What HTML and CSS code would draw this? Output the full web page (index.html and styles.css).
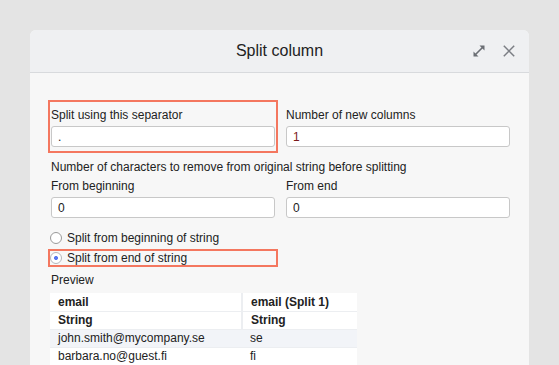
FILE: index.html
```html
<!DOCTYPE html>
<html lang="en">
<head>
<meta charset="utf-8">
<title>Split column</title>
<link rel="stylesheet" href="styles.css">
</head>
<body>
<div class="dialog">
    <header class="dialog-head">
        <span></span>
        <h1>Split column</h1>
        <div class="tools">
            <svg width="12" height="12" viewBox="0 0 12 12">
                <path d="M0.5 11.5 L0.5 6.5 L5.5 11.5 Z M11.5 0.5 L6.5 0.5 L11.5 5.5 Z" fill="#6b6e74"/>
                <path d="M2.5 9.5 L9.5 2.5" stroke="#6b6e74" stroke-width="1.6"/>
            </svg>
            <svg width="12" height="12" viewBox="0 0 12 12">
                <path d="M0.8 0.8 L11.2 11.2 M11.2 0.8 L0.8 11.2" stroke="#7b7e84" stroke-width="1.5"/>
            </svg>
        </div>
    </header>
    <div class="dialog-body">
        <div class="fields">
            <div class="field marked">
                <label>Split using this separator</label>
                <input type="text" value=".">
            </div>
            <div class="field">
                <label>Number of new columns</label>
                <input type="text" class="num" value="1">
            </div>
        </div>
        <p class="caption">Number of characters to remove from original string before splitting</p>
        <div class="fields">
            <div class="field tight">
                <label>From beginning</label>
                <input type="text" value="0">
            </div>
            <div class="field tight">
                <label>From end</label>
                <input type="text" value="0">
            </div>
        </div>
        <div class="radios">
            <label class="radio"><input type="radio" name="dir"> Split from beginning of string</label>
            <label class="radio marked"><input type="radio" name="dir" checked> Split from end of string</label>
        </div>
        <p class="caption preview">Preview</p>
        <table class="preview-table">
            <tr class="head"><td>email</td><td>email (Split 1)</td></tr>
            <tr class="head"><td>String</td><td>String</td></tr>
            <tr class="alt"><td>john.smith@mycompany.se</td><td>se</td></tr>
            <tr><td>barbara.no@guest.fi</td><td>fi</td></tr>
        </table>
    </div>
</div>
</body>
</html>
```

FILE: styles.css
```css
* {
    margin: 0;
    padding: 0;
    box-sizing: border-box;
    font-family: "Liberation Sans", Arial, sans-serif;
}

html, body {
    overflow: hidden;
}

body {
    background: #e4e4e4;
    padding: 30px 0 0 30px;
    color: #222;
    font-size: 12px;
}

.dialog {
    width: 499px;
    height: 400px;
    background: #f7f7f7;
    border-radius: 6px 6px 0 0;
}

.dialog-head {
    height: 43px;
    display: grid;
    grid-template-columns: 1fr auto 1fr;
    align-items: center;
    background: #eff0f2;
    border-bottom: 1px solid #d8dadd;
    border-radius: 6px 6px 0 0;
}

.dialog-head h1 {
    font-size: 16px;
    font-weight: normal;
    color: #222;
}

.tools {
    display: flex;
    justify-content: flex-end;
    gap: 18px;
    padding-right: 14px;
}

.dialog-body {
    padding: 30px 19px 0 21px;
}

.fields {
    display: grid;
    grid-template-columns: 224px 224px;
    gap: 11px;
}

.field {
    display: flex;
    flex-direction: column;
    padding: 4px 0 3px;
}

.field.tight {
    padding: 0;
}

.field label {
    line-height: 16px;
    margin-bottom: 3px;
}

.marked {
    outline: 2px solid #f4775f;
    outline-offset: 1px;
}

.field input {
    height: 21px;
    border: 1px solid #c8c8c8;
    border-radius: 3px;
    background: #fff;
    padding: 0 6px;
    font-size: 12px;
    color: #222;
    outline: none;
}

.field input.num {
    color: #7a1a1a;
}

.caption {
    line-height: 16px;
    margin: 9px 0 3px;
}

.radios {
    display: flex;
    flex-direction: column;
    gap: 6px;
    margin: 13px 0 0 -1px;
    width: 226px;
}

.radio {
    display: flex;
    align-items: center;
    gap: 5px;
    height: 14px;
    line-height: 14px;
}

.radio.marked {
    outline-offset: 0;
}

.radio input {
    appearance: none;
    width: 12px;
    height: 12px;
    border: 1px solid #9a9a9a;
    border-radius: 50%;
    background: #fff;
}

.radio input:checked {
    border-color: #b4b6bc;
    background: radial-gradient(circle, #5a78f0 0 1.7px, #fff 2.3px);
}

.caption.preview {
    margin: 7px 0 5px;
}

.preview-table {
    margin-left: -1px;
    width: 307px;
    border-collapse: collapse;
}

.preview-table td {
    height: 18px;
    padding: 0 8px;
    border-bottom: 1px solid #eceef1;
    white-space: nowrap;
}

.preview-table td:first-child {
    width: 192px;
}

.preview-table tr.head td {
    background: #fff;
    font-weight: bold;
}

.preview-table tr.head td:first-child {
    border-right: 2px solid #eceef1;
}

.preview-table tr.alt td {
    background: #f2f4f8;
}

.preview-table tr:last-child td {
    background: #fff;
}
```
